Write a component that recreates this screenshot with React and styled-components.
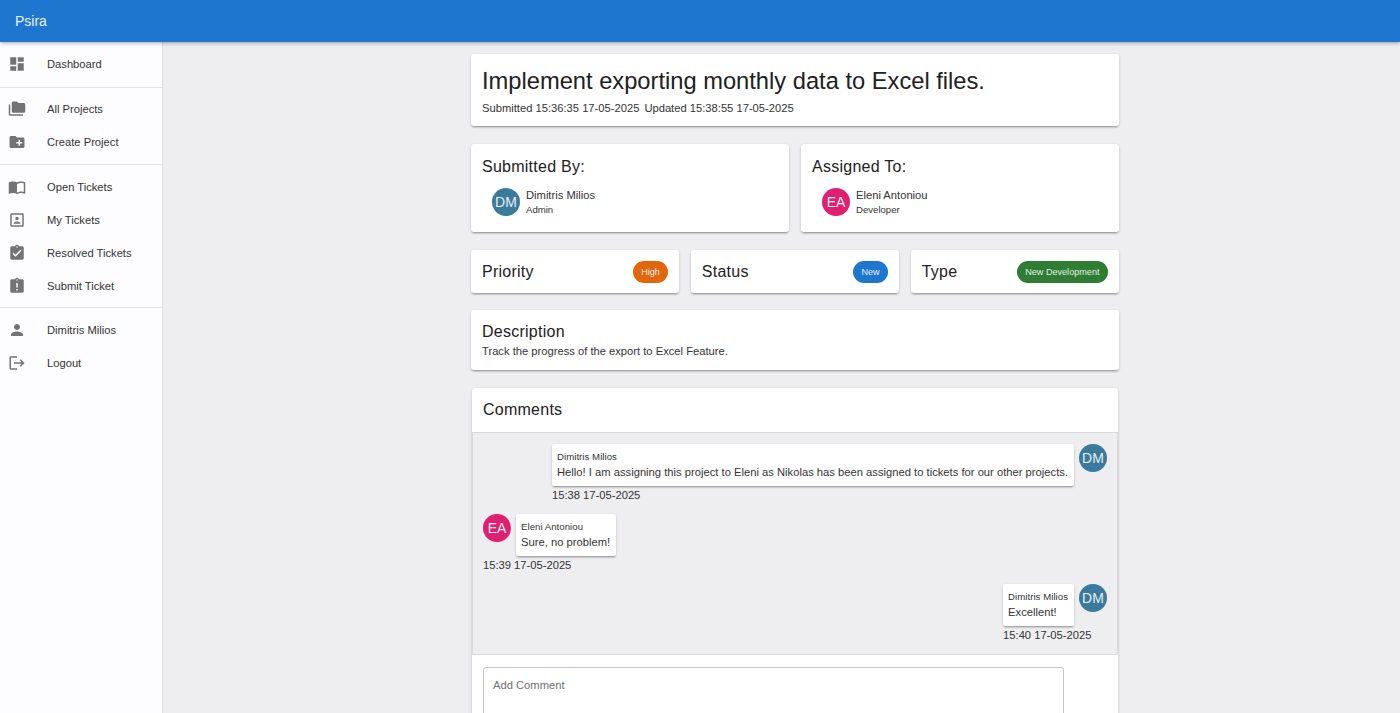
import React from 'react';
import styled, { createGlobalStyle } from 'styled-components';
import {
  MdDashboard, MdFolderCopy, MdCreateNewFolder, MdImportContacts, MdPortrait,
  MdAssignmentTurnedIn, MdAssignmentLate, MdPerson, MdLogout,
} from 'react-icons/md';

const Global = createGlobalStyle`
  html, body { margin: 0; padding: 0; height: 100%; overflow: hidden; }
  body { font-family: "Liberation Sans", Arial, sans-serif; color: #212121; background: #eeeef0; }
  * { box-sizing: border-box; }
`;

const Shell = styled.div`
  height: 100vh;
  display: flex;
  flex-direction: column;
  overflow: hidden;
`;

const AppBar = styled.header`
  height: 42px;
  flex: none;
  display: flex;
  align-items: center;
  padding-left: 15px;
  background: #1f76cf;
  color: #e8f0fa;
  font-size: 14px;
  box-shadow: 0 1px 4px rgba(0, 0, 0, 0.35);
  position: relative;
  z-index: 2;
`;

const Body = styled.div`
  flex: 1;
  display: flex;
  min-height: 0;
`;

const Sidebar = styled.nav`
  width: 163px;
  flex: none;
  background: #fdfcfe;
  border-right: 1px solid #dfdfe2;
`;

const NavGroup = styled.div`
  padding: 5px 0;
  border-bottom: ${props => (props.$last ? 'none' : '1px solid #e3e3e6')};
  &:first-child {
    padding: 5px 0 7px;
  }
  &:nth-child(2) {
    padding: 4px 0 6px;
  }
`;

const NavItem = styled.div`
  height: 33px;
  display: flex;
  align-items: center;
  padding-left: 8px;
  font-size: 11.2px;
  color: #333;
  svg {
    width: 18px;
    height: 18px;
    color: #737376;
    flex: none;
  }
  span {
    margin-left: 21px;
  }
`;

const Main = styled.main`
  flex: 1;
  display: flex;
  justify-content: center;
  padding: 12px 0 0 27px;
  min-width: 0;
`;

const Column = styled.div`
  width: 648px;
  display: flex;
  flex-direction: column;
`;

const Card = styled.section`
  flex: none;
  background: #fff;
  border-radius: 3px;
  box-shadow: 0 2px 2px -1px rgba(0, 0, 0, 0.3), 0 1px 3px rgba(0, 0, 0, 0.18);
`;

const TitleCard = styled(Card)`
  height: 72px;
  padding: 13px 11px 0;
  margin-bottom: 18px;
`;

const Title = styled.h1`
  margin: 0;
  font-size: 23.7px;
  font-weight: 400;
  line-height: 28px;
`;

const Meta = styled.div`
  display: flex;
  gap: 5px;
  margin-top: 5px;
  font-size: 11.2px;
  line-height: 16px;
  color: #333;
`;

const PeopleRow = styled.div`
  flex: none;
  display: grid;
  grid-template-columns: 1fr 1fr;
  gap: 12px;
  margin-bottom: 18px;
`;

const PersonCard = styled(Card)`
  height: 88px;
  padding: 13px 11px 0;
`;

const CardHeading = styled.h2`
  margin: 0;
  font-size: 16px;
  font-weight: 400;
  line-height: 20px;
  letter-spacing: 0.25px;
`;

const PersonRow = styled.div`
  display: flex;
  align-items: flex-start;
  gap: 6px;
  margin: 11px 0 0 10px;
`;

const Avatar = styled.div`
  width: 28px;
  height: 28px;
  flex: none;
  border-radius: 50%;
  background: ${props => props.$color};
  color: #e9eef2;
  font-size: 14px;
  display: flex;
  align-items: center;
  justify-content: center;
`;

const PersonName = styled.div`
  font-size: 11.2px;
  line-height: 15px;
  color: #333;
`;

const PersonRole = styled.div`
  font-size: 9.6px;
  line-height: 14px;
  color: #333;
`;

const BadgeRow = styled.div`
  flex: none;
  display: grid;
  grid-template-columns: 1fr 1fr 1fr;
  gap: 11.5px;
  margin-bottom: 17px;
`;

const BadgeCard = styled(Card)`
  height: 43px;
  display: flex;
  align-items: center;
  justify-content: space-between;
  padding: 0 11px;
`;

const Chip = styled.span`
  height: 22px;
  padding: 0 8.5px;
  border-radius: 11px;
  background: ${props => props.$color};
  color: #e6eef0;
  font-size: 9.1px;
  display: flex;
  align-items: center;
`;

const DescriptionCard = styled(Card)`
  height: 60px;
  padding: 12px 11px 0;
  margin-bottom: 18px;
`;

const DescriptionText = styled.p`
  margin: 1px 0 0;
  font-size: 11.2px;
  line-height: 16px;
  color: #333;
`;

const CommentsCard = styled(Card)`
  flex: 1;
  margin: 0 1px;
  border-radius: 3px 3px 0 0;
`;

const CommentsHeader = styled.div`
  height: 44px;
  padding: 12px 11px 0;
`;

const Thread = styled.div`
  height: 223px;
  background: #eeeef0;
  border: 1px solid #d9d9dc;
  padding: 11px 10px 0;
  display: flex;
  flex-direction: column;
  gap: 11px;
`;

const Message = styled.div`
  display: flex;
  flex-direction: column;
  align-self: ${props => (props.$mine ? 'flex-end' : 'flex-start')};
`;

const MessageRow = styled.div`
  display: flex;
  gap: 5px;
  flex-direction: ${props => (props.$mine ? 'row-reverse' : 'row')};
  align-items: flex-start;
`;

const Bubble = styled.div`
  background: #fff;
  border-radius: 2px;
  padding: 6px 6px 6px 5px;
  box-shadow: 0 2px 2px -1px rgba(0, 0, 0, 0.3), 0 1px 3px rgba(0, 0, 0, 0.16);
`;

const Sender = styled.div`
  font-size: 9.6px;
  line-height: 14px;
  color: #333;
  letter-spacing: 0.05px;
`;

const MessageText = styled.div`
  font-size: 11.2px;
  line-height: 16px;
  color: #333;
  white-space: nowrap;
  letter-spacing: 0.01px;
`;

const Stamp = styled.div`
  font-size: 11.2px;
  line-height: 16px;
  margin-top: 1px;
  color: #333;
  white-space: nowrap;
`;

const Composer = styled.div`
  padding: 12px 0 0 11px;
`;

const CommentInput = styled.div`
  width: 581px;
  height: 90px;
  border: 1px solid #c4c4c4;
  border-radius: 3px;
  padding: 11px 9px;
  font-size: 11.2px;
  color: #6f6f72;
`;

const navGroups = [
  [{ icon: MdDashboard, label: 'Dashboard' }],
  [
    { icon: MdFolderCopy, label: 'All Projects' },
    { icon: MdCreateNewFolder, label: 'Create Project' },
  ],
  [
    { icon: MdImportContacts, label: 'Open Tickets' },
    { icon: MdPortrait, label: 'My Tickets' },
    { icon: MdAssignmentTurnedIn, label: 'Resolved Tickets' },
    { icon: MdAssignmentLate, label: 'Submit Ticket' },
  ],
  [
    { icon: MdPerson, label: 'Dimitris Milios' },
    { icon: MdLogout, label: 'Logout' },
  ],
];

const BLUE = '#3a7a9c';
const PINK = '#e01f72';

const comments = [
  { mine: true, name: 'Dimitris Milios', text: 'Hello! I am assigning this project to Eleni as Nikolas has been assigned to tickets for our other projects.', time: '15:38 17-05-2025', initials: 'DM', color: BLUE },
  { mine: false, name: 'Eleni Antoniou', text: 'Sure, no problem!', time: '15:39 17-05-2025', initials: 'EA', color: PINK },
  { mine: true, name: 'Dimitris Milios', text: 'Excellent!', time: '15:40 17-05-2025', initials: 'DM', color: BLUE },
];

export default function App() {
  return (
    <Shell>
      <Global />
      <AppBar>Psira</AppBar>
      <Body>
        <Sidebar>
          {navGroups.map((group, i) => (
            <NavGroup key={i} $last={i === navGroups.length - 1}>
              {group.map(({ icon: Icon, label }) => (
                <NavItem key={label}>
                  <Icon />
                  <span>{label}</span>
                </NavItem>
              ))}
            </NavGroup>
          ))}
        </Sidebar>
        <Main>
          <Column>
            <TitleCard>
              <Title>Implement exporting monthly data to Excel files.</Title>
              <Meta>
                <span>Submitted 15:36:35 17-05-2025</span>
                <span>Updated 15:38:55 17-05-2025</span>
              </Meta>
            </TitleCard>
            <PeopleRow>
              <PersonCard>
                <CardHeading>Submitted By:</CardHeading>
                <PersonRow>
                  <Avatar $color={BLUE}>DM</Avatar>
                  <div>
                    <PersonName>Dimitris Milios</PersonName>
                    <PersonRole>Admin</PersonRole>
                  </div>
                </PersonRow>
              </PersonCard>
              <PersonCard>
                <CardHeading>Assigned To:</CardHeading>
                <PersonRow>
                  <Avatar $color={PINK}>EA</Avatar>
                  <div>
                    <PersonName>Eleni Antoniou</PersonName>
                    <PersonRole>Developer</PersonRole>
                  </div>
                </PersonRow>
              </PersonCard>
            </PeopleRow>
            <BadgeRow>
              <BadgeCard>
                <CardHeading>Priority</CardHeading>
                <Chip $color="#e2660c">High</Chip>
              </BadgeCard>
              <BadgeCard>
                <CardHeading>Status</CardHeading>
                <Chip $color="#1f76cf">New</Chip>
              </BadgeCard>
              <BadgeCard>
                <CardHeading>Type</CardHeading>
                <Chip $color="#2e7d32">New Development</Chip>
              </BadgeCard>
            </BadgeRow>
            <DescriptionCard>
              <CardHeading>Description</CardHeading>
              <DescriptionText>Track the progress of the export to Excel Feature.</DescriptionText>
            </DescriptionCard>
            <CommentsCard>
              <CommentsHeader>
                <CardHeading>Comments</CardHeading>
              </CommentsHeader>
              <Thread>
                {comments.map(c => (
                  <Message key={c.time} $mine={c.mine}>
                    <MessageRow $mine={c.mine}>
                      <Avatar $color={c.color}>{c.initials}</Avatar>
                      <Bubble>
                        <Sender>{c.name}</Sender>
                        <MessageText>{c.text}</MessageText>
                      </Bubble>
                    </MessageRow>
                    <Stamp>{c.time}</Stamp>
                  </Message>
                ))}
              </Thread>
              <Composer>
                <CommentInput>Add Comment</CommentInput>
              </Composer>
            </CommentsCard>
          </Column>
        </Main>
      </Body>
    </Shell>
  );
}
